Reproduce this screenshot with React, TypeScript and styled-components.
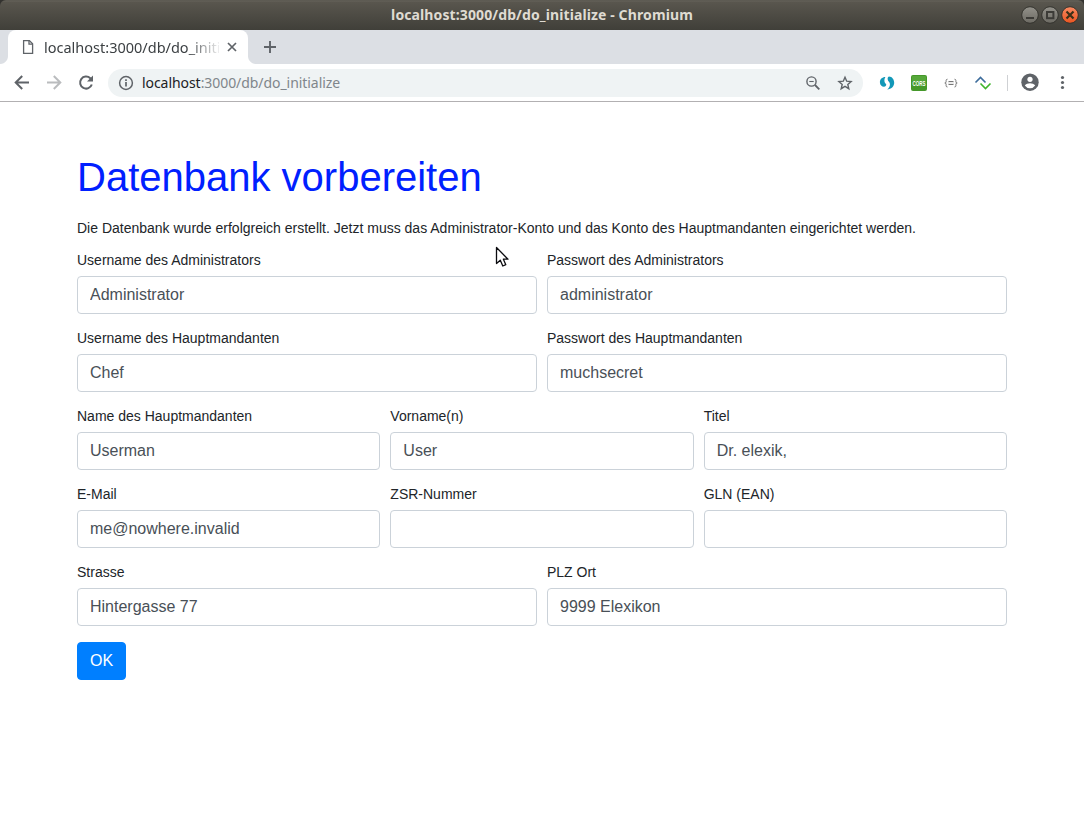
import React from "react";
import styled, { createGlobalStyle } from "styled-components";

const GlobalStyle = createGlobalStyle`
  *, *::before, *::after { box-sizing: border-box; }
  html, body { margin: 0; background: #fff; }
  body { font-family: "Liberation Sans", Arial, sans-serif; font-size: 14px; line-height: 16px; color: #212529; }
`;

const Window = styled.div`
  position: relative;
  width: 1084px;
  height: 829px;
  overflow: hidden;
  background: #33322f;
  display: flex;
  flex-direction: column;
`;

const TitleBar = styled.header`
  flex: none;
  height: 30px;
  display: grid;
  grid-template-columns: 1fr auto 1fr;
  align-items: center;
  padding: 0 5px;
  background: linear-gradient(#55534b 0, #66635b 1px, #59564e 2px, #403f39 100%);
  border-radius: 6px 6px 0 0;
`;

const TitleText = styled.div`
  grid-column: 2;
  font: 700 14px/30px "Noto Sans", sans-serif;
  letter-spacing: 0.11px;
  color: #dfdbd2;
  white-space: nowrap;
`;

const WindowControls = styled.div`
  display: flex;
  justify-content: flex-end;
  gap: 2px;
`;

const ControlIcon = styled.svg`
  width: 18px;
  height: 18px;
`;

const TabStrip = styled.div`
  flex: none;
  height: 34px;
  display: flex;
  background: #dcdfe4;
`;

const StripCurve = styled.div<{ $side: "left" | "right" }>`
  width: 8px;
  background: linear-gradient(#dcdfe4, #dcdfe4) 0 0 / 8px 26px no-repeat,
    radial-gradient(circle at ${(p) => (p.$side === "left" ? 0 : 8)}px 26px, #dcdfe4 7.5px, #fff 8.5px);
`;

const Tab = styled.div`
  width: 240px;
  display: flex;
  align-items: center;
  padding: 0 9px 0 14px;
  background: #fff;
  border-radius: 8px 8px 0 0;
`;

const TabTitle = styled.div`
  width: 175px;
  margin-left: 9px;
  margin-right: auto;
  overflow: hidden;
  white-space: nowrap;
  font: 14.5px/34px "Noto Sans", sans-serif;
  color: #3c4043;
  mask-image: linear-gradient(90deg, #000 142px, transparent 178px);
`;

const NewTab = styled.div`
  width: 28px;
  display: flex;
  align-items: center;
  justify-content: center;
`;

const Toolbar = styled.div`
  flex: none;
  height: 38px;
  display: flex;
  align-items: center;
  padding: 0 0 0 12px;
  background: #fff;
  border-bottom: 1px solid #b2b0b2;
`;

const NavButtons = styled.div`
  flex: none;
  width: 96px;
  display: flex;
  gap: 12px;
`;

const Glyph = styled.svg`
  display: block;
  flex: none;
  overflow: visible;
`;

const Omnibox = styled.div`
  flex: none;
  width: 755px;
  height: 28px;
  display: flex;
  align-items: center;
  padding: 0 10px;
  border-radius: 14px;
  background: #eff3f4;
`;

const Address = styled.div`
  margin-left: 8px;
  margin-right: auto;
  font: 14px/28px "Noto Sans", sans-serif;
  letter-spacing: -0.06px;
  color: #80868b;
  white-space: nowrap;
`;

const Host = styled.span`
  color: #202124;
`;

const OmniActions = styled.div`
  display: flex;
  gap: 16px;
`;

const Extensions = styled.div`
  display: flex;
  align-items: center;
  gap: 16px;
  margin-left: 16px;
`;

const Divider = styled.div`
  width: 1px;
  height: 16px;
  margin-left: 16px;
  margin-right: 12px;
  background: #cfd1d4;
`;

const MenuButton = styled.div`
  width: 24px;
  margin-left: 10px;
`;

const Viewport = styled.div`
  flex: 1;
  background: #fff;
`;

const Page = styled.main`
  width: 960px;
  margin: 0 auto;
  padding: 51px 15px 0;
`;

const Heading = styled.h1`
  margin: 0 0 19px;
  font-size: 40px;
  font-weight: 400;
  line-height: 48px;
  color: #0020ff;
`;

const Intro = styled.p`
  margin: 0 0 16px;
`;

const FormRow = styled.div<{ $columns: number }>`
  display: grid;
  grid-template-columns: repeat(${(p) => p.$columns}, 1fr);
  column-gap: 10px;
  margin-bottom: 16px;
`;

const Label = styled.label`
  display: block;
`;

const Caption = styled.span`
  display: block;
  margin-bottom: 8px;
`;

const Input = styled.input`
  display: block;
  width: 100%;
  height: 38px;
  padding: 6px 12px;
  font: 16px/24px "Liberation Sans", Arial, sans-serif;
  color: #495057;
  background: #fff;
  border: 1px solid #cbd2d9;
  border-radius: 4px;
  outline: none;
`;

const SubmitButton = styled.button`
  display: block;
  height: 38px;
  padding: 6px 12px;
  font: 16px/24px "Liberation Sans", Arial, sans-serif;
  color: #fff;
  background: #007fff;
  border: 1px solid #007fff;
  border-radius: 4px;
`;

const Pointer = styled.svg`
  position: absolute;
  left: 495px;
  top: 246px;
`;

const rows: [string, string][][] = [
  [["Username des Administrators", "Administrator"], ["Passwort des Administrators", "administrator"]],
  [["Username des Hauptmandanten", "Chef"], ["Passwort des Hauptmandanten", "muchsecret"]],
  [["Name des Hauptmandanten", "Userman"], ["Vorname(n)", "User"], ["Titel", "Dr. elexik,"]],
  [["E-Mail", "me@nowhere.invalid"], ["ZSR-Nummer", ""], ["GLN (EAN)", ""]],
  [["Strasse", "Hintergasse 77"], ["PLZ Ort", "9999 Elexikon"]],
];

function WindowControl({ kind }: { kind: "min" | "max" | "close" }) {
  const close = kind === "close";
  const id = `control-${kind}`;
  return (
    <ControlIcon viewBox="0 0 18 18">
      <defs>
        <linearGradient id={id} x1="0" y1="0" x2="0" y2="1">
          <stop offset="0" stopColor={close ? "#f98a62" : "#93918a"} />
          <stop offset="1" stopColor={close ? "#ea5420" : "#6c6a63"} />
        </linearGradient>
      </defs>
      <circle cx="9" cy="9" r="8.3" fill={`url(#${id})`} stroke="#34332e" strokeWidth="1" />
      {kind === "min" && <path d="M5 12h8" stroke="#3c3b37" strokeWidth="2" />}
      {kind === "max" && <rect x="6" y="6" width="6.4" height="6.2" fill="none" stroke="#3c3b37" strokeWidth="2" />}
      {close && <path d="M5.5 5.5l7 7m0-7l-7 7" stroke="#3c3018" strokeWidth="2.2" />}
    </ControlIcon>
  );
}

export default function App() {
  return (
    <>
      <GlobalStyle />
      <Window>
        <TitleBar>
          <TitleText>localhost:3000/db/do_initialize - Chromium</TitleText>
          <WindowControls>
            <WindowControl kind="min" />
            <WindowControl kind="max" />
            <WindowControl kind="close" />
          </WindowControls>
        </TitleBar>

        <TabStrip>
          <StripCurve $side="left" />
          <Tab>
            <Glyph width="13" height="16" viewBox="0 0 13 16" fill="none" stroke="#5f6368" strokeWidth="1.3">
              <path d="M1.600 1.600h5.800l3.200 3.200v9.600h-9z" />
              <path d="M7 1.800v3.400h3.500" />
            </Glyph>
            <TabTitle>localhost:3000/db/do_initialize</TabTitle>
            <Glyph width="14" height="14" viewBox="0 0 14 14" stroke="#5f6368" strokeWidth="1.7">
              <path d="M3 3l8 8m0-8l-8 8" />
            </Glyph>
          </Tab>
          <StripCurve $side="right" />
          <NewTab>
            <Glyph width="14" height="14" viewBox="0 0 14 14" stroke="#5f6368" strokeWidth="1.9">
              <path d="M7 1v12M1 7h12" />
            </Glyph>
          </NewTab>
        </TabStrip>

        <Toolbar>
          <NavButtons>
            <Glyph width="20" height="20" viewBox="0 0 20 20" fill="none" stroke="#5f6368" strokeWidth="2">
              <path d="M17 9.500H4M10.200 3L3.700 9.500l6.500 6.500" />
            </Glyph>
            <Glyph width="20" height="20" viewBox="0 0 20 20" fill="none" stroke="#babcbe" strokeWidth="2">
              <path d="M3 9.500h13M9.800 3l6.500 6.500-6.500 6.500" />
            </Glyph>
            <Glyph width="20" height="20" viewBox="0 0 20 20" fill="none" stroke="#5f6368" strokeWidth="2">
              <path d="M15.800 11.500a6 6 0 1 1-1.500-6.200l1.500 1.600" />
              <path d="M17 2.500v6h-6z" fill="#5f6368" stroke="none" />
            </Glyph>
          </NavButtons>
          <Omnibox>
            <Glyph width="16" height="16" viewBox="0 0 16 16" fill="none" stroke="#5f6368" strokeWidth="1.5">
              <circle cx="8" cy="8" r="6.4" />
              <path d="M8 7v4.500M8 4.200v1.700" strokeWidth="1.7" />
            </Glyph>
            <Address>
              <Host>localhost</Host>:3000/db/do_initialize
            </Address>
            <OmniActions>
              <Glyph width="16" height="16" viewBox="0 0 16 16" fill="none" stroke="#5f6368" strokeWidth="1.4">
                <circle cx="6.500" cy="6.500" r="4.600" />
                <path d="M4.300 6.500h4.400" strokeWidth="1.1" />
                <path d="M10 10l4.300 4.300" strokeWidth="1.8" />
              </Glyph>
              <Glyph width="16" height="16" viewBox="0 0 16 16" fill="none" stroke="#5f6368" strokeWidth="1.4">
                <path d="M8 2.200l1.700 4 4.400.4-3.300 2.900 1 4.200L8 11.400l-3.800 2.300 1-4.200-3.300-2.900 4.400-.4z" />
              </Glyph>
            </OmniActions>
          </Omnibox>
          <Extensions>
            <Glyph width="16" height="16" viewBox="0 0 16 16" fill="#1298b8">
              <path d="M6.400 2C3 2 .900 4.500.900 7.200c0 2.800 2 4.500 4 4.500 1.800 0 2.700-1.300 2.200-2.700C5.300 8 4.800 4.500 6.400 2z" />
              <path d="M9.900 1.600C13 1.600 15.200 4.600 15.200 7.800c0 3.700-3 6.600-7 6.600 2.700-1.900 3.500-5.200 1.900-7.400C8.500 5.700 7.900 2.500 9.900 1.600z" />
            </Glyph>
            <Glyph width="16" height="16" viewBox="0 0 16 16">
              <rect width="16" height="16" rx="2" fill="#45982a" />
              <rect x="1" y="1" width="14" height="5" rx="1" fill="#56a83a" />
              <text x="1.500" y="10.800" textLength="13" lengthAdjust="spacingAndGlyphs" fill="#fff" fontFamily="Liberation Sans, sans-serif" fontWeight="700" fontSize="8">CORS</text>
            </Glyph>
            <Glyph width="16" height="16" viewBox="0 0 16 16" fill="none" stroke="#777" strokeWidth="1">
              <path d="M4.500 4.200q-1.400 0-1.400 1.400v1.200q0 1.200-1.300 1.200 1.300 0 1.300 1.200v1.500q0 1.300 1.400 1.300M11.500 4.200q1.400 0 1.400 1.400v1.200q0 1.200 1.300 1.200-1.300 0-1.300 1.200v1.500q0 1.300-1.400 1.300" />
              <path d="M5.500 6.500h5M5.500 9.500h5" />
              <path d="M5.500 8h5" strokeDasharray="1 1" strokeOpacity="0.6" />
            </Glyph>
            <Glyph width="16" height="16" viewBox="0 0 16 16" fill="none" strokeWidth="1.6">
              <path d="M.500 7.500L5.500 2.500l5 5" stroke="#3e6d9c" />
              <path d="M5.500 8.500l5 5 5-5" stroke="#3fb52c" />
            </Glyph>
          </Extensions>
          <Divider />
          <Glyph width="20" height="20" viewBox="0 0 20 20">
            <circle cx="10" cy="9.200" r="8.700" fill="#5f6368" />
            <circle cx="10" cy="6.300" r="2.600" fill="#fff" />
            <path d="M4.800 12.600c1-1.600 3.400-2.400 5.200-2.400s4.200.8 5.200 2.400A6.200 6.200 0 0 1 10 15.300a6.200 6.200 0 0 1-5.200-2.700z" fill="#fff" />
          </Glyph>
          <MenuButton>
            <Glyph width="24" height="20" viewBox="0 0 24 20" fill="#5f6368">
              <circle cx="12.500" cy="4.500" r="1.600" />
              <circle cx="12.500" cy="9.500" r="1.600" />
              <circle cx="12.500" cy="14.500" r="1.600" />
            </Glyph>
          </MenuButton>
        </Toolbar>

        <Viewport>
          <Page>
            <Heading>Datenbank vorbereiten</Heading>
            <Intro>
              Die Datenbank wurde erfolgreich erstellt. Jetzt muss das Administrator-Konto und das Konto des
              Hauptmandanten eingerichtet werden.
            </Intro>
            {rows.map((fields, i) => (
              <FormRow key={i} $columns={fields.length}>
                {fields.map(([label, value]) => (
                  <Label key={label}>
                    <Caption>{label}</Caption>
                    <Input type="text" defaultValue={value} />
                  </Label>
                ))}
              </FormRow>
            ))}
            <SubmitButton type="button">OK</SubmitButton>
          </Page>
        </Viewport>

        <Pointer width="16" height="22" viewBox="0 0 16 22">
          <path d="M1.500 1.500v16l3.800-3.300 2.500 5.800 3-1.300-2.400-5.500h4.600z" fill="#fff" stroke="#0c0c10" strokeWidth="1.3" strokeLinejoin="round" />
        </Pointer>
      </Window>
    </>
  );
}
